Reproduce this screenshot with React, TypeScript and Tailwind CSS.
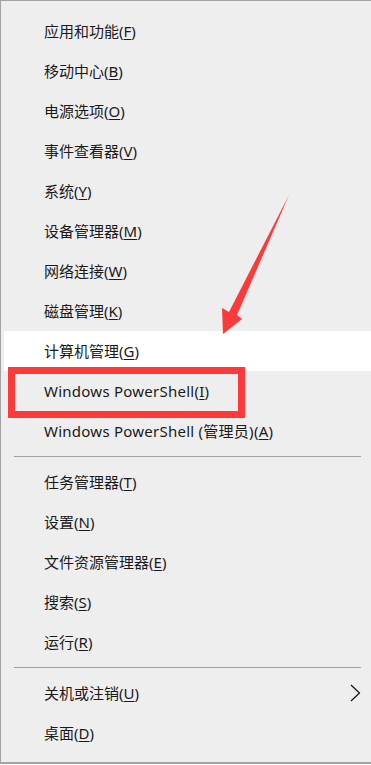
import React from 'react';

type Item = { label: string; key: string; highlight?: boolean; sub?: boolean };

const GROUP_A: Item[] = [
  { label: '应用和功能', key: 'F' },
  { label: '移动中心', key: 'B' },
  { label: '电源选项', key: 'O' },
  { label: '事件查看器', key: 'V' },
  { label: '系统', key: 'Y' },
  { label: '设备管理器', key: 'M' },
  { label: '网络连接', key: 'W' },
  { label: '磁盘管理', key: 'K' },
  { label: '计算机管理', key: 'G', highlight: true },
  { label: 'Windows PowerShell', key: 'I' },
  { label: 'Windows PowerShell (管理员)', key: 'A' },
];

const GROUP_B: Item[] = [
  { label: '任务管理器', key: 'T' },
  { label: '设置', key: 'N' },
  { label: '文件资源管理器', key: 'E' },
  { label: '搜索', key: 'S' },
  { label: '运行', key: 'R' },
];

const GROUP_C: Item[] = [
  { label: '关机或注销', key: 'U', sub: true },
  { label: '桌面', key: 'D' },
];

const MenuRow: React.FC<{ item: Item }> = ({ item }) => (
  <div
    className={`h-10 ml-[3px] flex items-center pl-[40px] pr-[10px] text-[15px] text-[#1a1a1a] ${
      item.highlight ? 'bg-white' : ''
    }`}
  >
    <span className={item.label.startsWith('Windows') ? 'tracking-[0.25px]' : ''}>
      {item.label}(<span className="underline underline-offset-2">{item.key}</span>)
    </span>
    {item.sub && (
      <svg className="ml-auto" width="11" height="18" viewBox="0 0 11 18" fill="none">
        <path d="M1 1 L9.5 9 L1 17" stroke="#111" strokeWidth="1.2" />
      </svg>
    )}
  </div>
);

const Separator = () => (
  <div className="h-[11px] flex items-center pl-[13px] pr-[10px]">
    <div className="h-px w-full bg-[#a0a0a0]" />
  </div>
);

export default function App() {
  return (
    <div className="relative w-[371px] h-[765px] bg-white overflow-hidden">
      <div
        className="w-[371px] h-[764px] bg-[#eeeeee] border-t border-l border-b-2 border-[#a3a3a3] pt-[10px]"
        style={{ fontFamily: '"Noto Sans", "Noto Sans CJK SC", sans-serif' }}
      >
        {GROUP_A.map((item) => (
          <MenuRow key={item.key} item={item} />
        ))}
        <Separator />
        {GROUP_B.map((item) => (
          <MenuRow key={item.key} item={item} />
        ))}
        <Separator />
        {GROUP_C.map((item) => (
          <MenuRow key={item.key} item={item} />
        ))}
      </div>

      {/* red annotation box */}
      <div className="absolute left-[8px] top-[367px] w-[237px] h-[51px] border-[7px] border-[#fd3a3a]" />

      {/* red arrow */}
      <svg className="absolute left-0 top-0" width="371" height="400" viewBox="0 0 371 400">
        <polygon points="289,195 237,315 242,319 223,334 222,308 229,312" fill="#fd3a3a" />
      </svg>
    </div>
  );
}
